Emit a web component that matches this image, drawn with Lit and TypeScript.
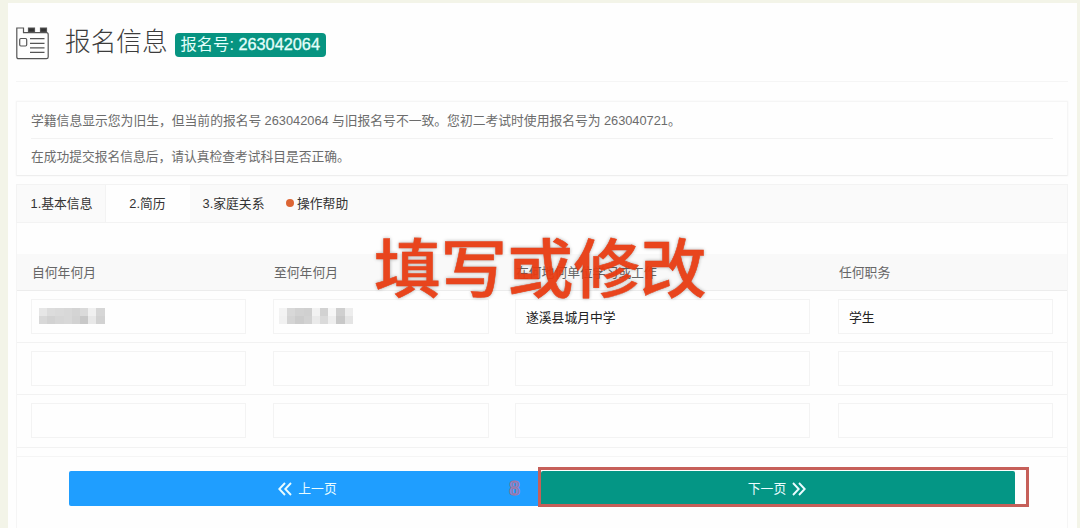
import { LitElement, html, css, svg } from "lit";
import { customElement, property } from "lit/decorators.js";

const chevrons = (left: boolean) => html`<svg class="chev" width="14" height="14" viewBox="0 0 14 14" fill="none" stroke="#eafcff" stroke-width="1.9">
  ${left ? svg`<path d="M7 1 L1.3 7 L7 13 M13 1 L7.3 7 L13 13"/>` : svg`<path d="M1 1 L6.7 7 L1 13 M7 1 L12.7 7 L7 13"/>`}
</svg>`;

@customElement("masked-value")
class MaskedValue extends LitElement {
  @property({ attribute: false }) shades: string[] = [];
  static styles = css`
    :host { display: grid; grid-template-columns: repeat(9, 8.2px); grid-auto-rows: 8px; }
  `;
  render() {
    return this.shades.map((c) => html`<i style="background:${c}"></i>`);
  }
}

const maskA = ["#e6e6e6", "#dcdcdc", "#dadada", "#d8d8d8", "#d4d4d4", "#dadada", "#f0f0f0", "#d6d6d6", "#fefefe",
  "#d8d8d8", "#d2d2d2", "#d6d6d6", "#d8d8d8", "#d2d2d2", "#c8c8c8", "#e8e8e8", "#d2d2d2", "#fefefe"];
const maskB = ["#f3f3f3", "#d8d8d8", "#d2d2d2", "#d0d0d0", "#f2f2f2", "#d2d2d2", "#f6f6f6", "#cfcfcf", "#ededed",
  "#f1f1f1", "#d4d4d4", "#cccccc", "#d2d2d2", "#eaeaea", "#dadada", "#eeeeee", "#c8c8c8", "#e4e4e4"];

@customElement("app-root")
class AppRoot extends LitElement {
  static styles = css`
    :host {
      display: block; height: 528px; overflow: hidden; position: relative; box-sizing: border-box;
      padding: 3px 3px 0 8px; background: #f3f4e8; color: #666;
      font: 12.8px/20px "Liberation Sans", "Noto Sans CJK SC", sans-serif;
    }
    * { box-sizing: border-box; }
    .page { height: 525px; background: #fefefe; padding: 0 9px 0 8px; }
    header { display: flex; height: 79px; border-bottom: 1px solid #f5f5f5; }
    .logo { margin: 23px 0 0 0; flex: none; }
    h1 { margin: 17px 0 0 15px; font-size: 25.7px; line-height: 40px; font-weight: 300; color: #3c3c3c;
      font-family: "Noto Sans CJK SC", sans-serif; }
    .badge { margin: 30px 0 0 7px; height: 24px; width: 151px; border-radius: 4px; background: #079481; color: #e4fffb;
      font-size: 16.3px; line-height: 23px; text-align: center; white-space: nowrap; }
    .badge b { font-weight: 400; -webkit-text-stroke: .3px #e4fffb; }
    .notice { margin-top: 19px; height: 75px; padding: 0 14px; border: 1px solid #f5f5f5; border-bottom-color: #eeeeee;
      box-shadow: 0 0 2px #f4f4f4; color: #6c6c6c; }
    .notice p { margin: 0; height: 36px; line-height: 37px; }
    .notice p:first-child { word-spacing: -.3px; }
    .notice p + p { border-top: 1px solid #f2f2f2; line-height: 36px; font-size: 12.75px; }
    .tabs { margin-top: 8px; height: 39px; display: flex; background: #fafafa; border: 1px solid #f3f3f3; color: #333; line-height: 37px; padding-left: 1px; }
    .tab { text-align: center; }
    .t1 { width: 88px; border-right: 1px solid #f3f3f3; }
    .t2 { width: 84px; background: #fefefe; padding-right: 1px; }
    .t3 { width: 87px; }
    .t4 { margin-left: 9px; display: flex; align-items: center; gap: 3px; }
    .dot { width: 8px; height: 8px; border-radius: 50%; background: #dc6534; margin-top: -2px; }
    .body { border: solid #f5f5f5; border-width: 0 1px; height: 400px; padding-top: 31px; }
    .row { display: grid; grid-template-columns: 242px 242px 323px 1fr; height: 52.2px; border-bottom: 1px solid #f2f2f2; align-items: center; }
    .head { height: 37px; background: #f9f9f9; border-bottom-color: #ececec; color: #666; }
    .head .cell { padding: 2px 0 0 15px; }
    .cell { padding: 0 14px; }
    .field { height: 35px; border: 1px solid #f3f3f3; background: #fefefe; padding-left: 10px; line-height: 35px; color: #222; }
    .cell:nth-child(1) .field { width: 215px; }
    .cell:nth-child(2) .field { width: 216px; padding-left: 5px; }
    .cell:nth-child(1) masked-value { margin-left: -3px; }
    .field masked-value { margin-top: 8px; }
    .actions { display: flex; margin: 8px 0 0; padding: 14px 52px 0; border-top: 1px solid #f5f5f5; }
    .btn { height: 35px; display: flex; align-items: center; justify-content: center; gap: 6px; color: #eafcff; padding-top: 2px; }
    .prev { width: 472px; background: #1f9eff; border-radius: 2px 0 0 2px; padding-left: 5px; }
    .next { flex: 1; background: #049685; border-radius: 2px; padding-right: 2px; }
    .chev { flex: none; }
    .caption { position: absolute; left: 374px; top: 216px; font: 500 66.5px/96px "Noto Sans CJK SC", sans-serif; color: #e83a10;
      -webkit-text-stroke: .6px #e83a10; white-space: nowrap; text-shadow: 0 1px 4px rgba(0,0,0,.4); transform: scaleY(.95); opacity: .94; }
    .frame { position: absolute; left: 538px; top: 467px; width: 491px; height: 40px; border: 3px solid #c65f59; }
    .step { position: absolute; left: 509px; top: 475px; font: 700 22px/25px "Liberation Serif", serif; color: #6f8cd8; -webkit-text-stroke: 1px #a8749f; }
  `;

  render() {
    return html`
      <div class="page">
        <header>
          <svg class="logo" width="34" height="35" viewBox="0 0 34 35" fill="none" stroke="#555" stroke-width="1.2">
            <path d="M.8 2 H7.5 V6.7 H30.5 Q32.2 6.7 32.2 8.7 V31 Q32.2 32.7 30.5 32.7 H2.5 Q.8 32.7 .8 31 Z"/>
            <path d="M12.5 2 H18.5 V6 H12.5 Z M24.5 2 H30.5 V6 H24.5 Z" fill="#333"/>
            <rect x="3.7" y="12.5" width="7" height="7.5" rx="1.2"/>
            <path d="M14 12.7 H28.5 M14 17.4 H28.5 M14 21.8 H28.5 M14 26.3 H28.5"/>
          </svg>
          <h1>报名信息</h1>
          <div class="badge">报名号: <b>263042064</b></div>
        </header>
        <div class="notice">
          <p>学籍信息显示您为旧生，但当前的报名号 263042064 与旧报名号不一致。您初二考试时使用报名号为 263040721。</p>
          <p>在成功提交报名信息后，请认真检查考试科目是否正确。</p>
        </div>
        <nav class="tabs">
          <div class="tab t1">1.基本信息</div>
          <div class="tab t2">2.简历</div>
          <div class="tab t3">3.家庭关系</div>
          <div class="tab t4"><span class="dot"></span>操作帮助</div>
        </nav>
        <div class="body">
          <div class="row head">
            ${["自何年何月", "至何年何月", "在何地何单位学习或工作", "任何职务"].map((t) => html`<div class="cell">${t}</div>`)}
          </div>
          <div class="row">
            <div class="cell"><div class="field"><masked-value .shades=${maskA}></masked-value></div></div>
            <div class="cell"><div class="field"><masked-value .shades=${maskB}></masked-value></div></div>
            <div class="cell"><div class="field">遂溪县城月中学</div></div>
            <div class="cell"><div class="field">学生</div></div>
          </div>
          ${[0, 1].map(() => html`<div class="row">${[0, 1, 2, 3].map(() => html`<div class="cell"><div class="field"></div></div>`)}</div>`)}
          <div class="actions">
            <div class="btn prev">${chevrons(true)}<span>上一页</span></div>
            <div class="btn next"><span>下一页</span>${chevrons(false)}</div>
          </div>
        </div>
      </div>
      <div class="caption">填写或修改</div>
      <div class="frame"></div>
      <div class="step">8</div>
    `;
  }
}
